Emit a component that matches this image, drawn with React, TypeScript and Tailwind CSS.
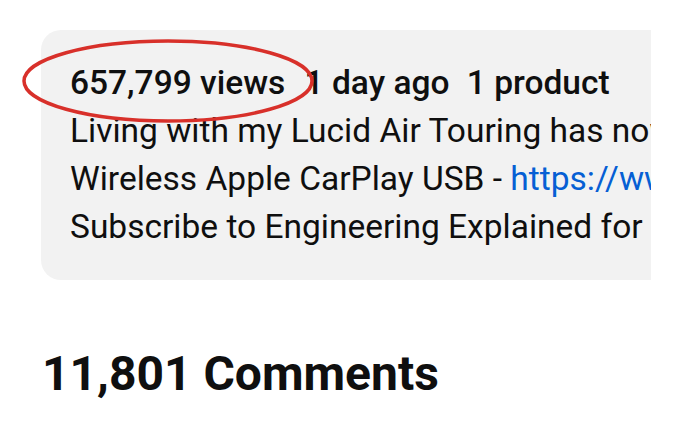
import React from "react";

const App = () => {
  return (
    <div className="relative w-[686px] h-[422px] bg-white overflow-hidden font-['Roboto',sans-serif] text-[#0f0f0f]">
      <div className="ml-[41px] mt-[30px] w-[610px] h-[250px] bg-[#f2f2f2] rounded-l-[20px] overflow-hidden pl-[29px] pt-[29px] text-[33.5px] leading-[48px] whitespace-nowrap">
        <div className="font-medium">
          <span className="mr-[11px]">657,799 views</span>{" "}
          <span className="mr-[9px]">1 day ago</span>{" "}
          <span>1 product</span>
        </div>
        <div>Living with my Lucid Air Touring has now been quite an experience</div>
        <div>
          Wireless Apple CarPlay USB -{" "}
          <span className="text-[#065fd4]">https://www.amazon.com</span>
        </div>
        <div>Subscribe to Engineering Explained for more videos</div>
      </div>
      <h2 className="ml-[42px] mt-[66px] text-[48px] leading-[56px] font-bold">11,801 Comments</h2>
      <svg className="absolute left-0 top-0" width="686" height="422">
        <ellipse cx="168" cy="81" rx="144" ry="40" fill="none" stroke="#d8302a" strokeWidth="3.5" />
      </svg>
    </div>
  );
};

export default App;
